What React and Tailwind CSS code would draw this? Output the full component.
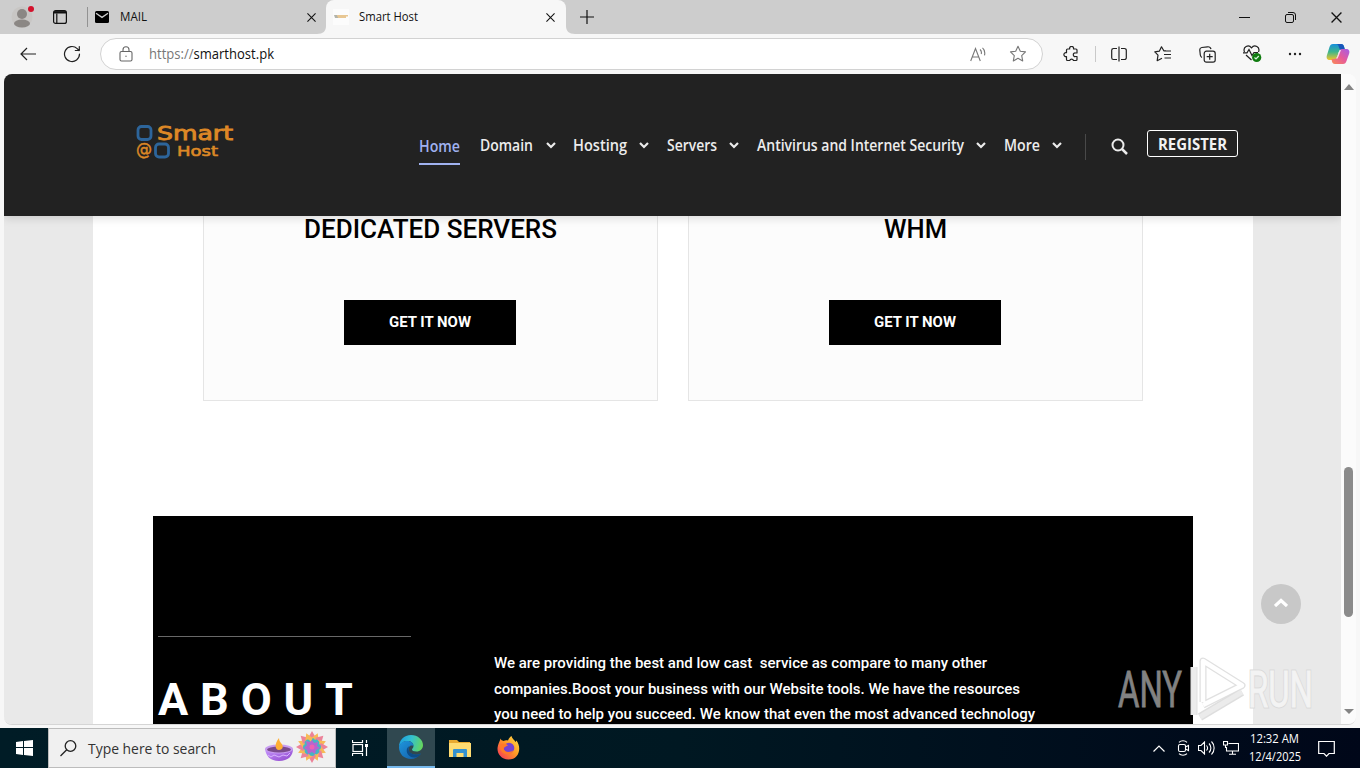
import clsx from 'clsx'

const navItems = [
  { label: 'Domain', width: 'w-[93px]', text: 'w-[54px]', length: 53 },
  { label: 'Hosting', width: 'w-[94px]', text: 'w-[54px]', length: 54 },
  { label: 'Servers', width: 'w-[90px]', text: 'w-[50px]', length: 50 },
  { label: 'Antivirus and Internet Security', width: 'w-[247px]', text: 'w-[207px]', length: 207 },
  { label: 'More', width: 'w-[81px]', text: 'w-[36px]', length: 36 },
]

const aboutLines = [
  { text: 'We are providing the best and low cast\u00a0 service as compare to many other', length: 493 },
  { text: 'companies.Boost your business with our Website tools. We have the resources', length: 526 },
  { text: 'you need to help you succeed. We know that even the most advanced technology', length: 541 },
]

// One line of text fitted to a known width
function FitText({ children, length, size, weight = 400, height = 20, className, baseline = 15 }) {
  return (
    <svg width={length} height={height} className={clsx('block shrink-0 overflow-visible', className)} fill="currentColor">
      <text x="0" y={baseline} fontSize={size} fontWeight={weight} textLength={length} lengthAdjust="spacingAndGlyphs">
        {children}
      </text>
    </svg>
  )
}

function Icon({ size = 18, children, className, width = 1.1 }) {
  return (
    <svg
      width={size}
      height={size}
      viewBox="0 0 18 18"
      fill="none"
      stroke="currentColor"
      strokeWidth={width}
      strokeLinecap="round"
      strokeLinejoin="round"
      className={clsx('block shrink-0', className)}
    >
      {children}
    </svg>
  )
}

function CloseIcon({ size = 9 }) {
  return (
    <svg width={size} height={size} viewBox="0 0 10 10" stroke="#111" strokeWidth="1.2" className="block shrink-0">
      <path d="M.5.5l9 9M9.5.5l-9 9" />
    </svg>
  )
}

function TabBar() {
  return (
    <div className="flex h-[34px] items-center bg-[#cdcdcd] text-[#111]">
      <svg width="24" height="24" viewBox="0 0 24 24" className="ml-[11px]">
        <circle cx="11" cy="12" r="10.500" fill="#c8c6c4" />
        <circle cx="11" cy="9" r="5" fill="#8b8784" />
        <ellipse cx="11" cy="18.500" rx="8" ry="4" fill="#8b8784" />
        <circle cx="20" cy="4" r="3" fill="#d3122c" />
      </svg>
      <svg width="14" height="14" viewBox="0 0 14 14" className="ml-[18px]" fill="none" stroke="#111" strokeWidth="1.200">
        <rect x=".6" y=".6" width="12.800" height="12.800" rx="2" />
        <path d="M1 2.300h12" strokeWidth="2.400" />
        <path d="M3.800 3.500V13" />
      </svg>
      <div className="ml-5 h-5 w-px bg-[#929292]" />
      <svg width="14" height="12" viewBox="0 0 14 12" className="ml-[7px]">
        <rect width="14" height="12" rx="1.500" fill="#000" />
        <path d="M1 2.300L7 6.400l6-4.100" fill="none" stroke="#cdcdcd" strokeWidth="1.300" />
      </svg>
      <FitText length={27} size={12} height={20} baseline={14} className="ml-[11px]">MAIL</FitText>
      <div className="ml-[160px]"><CloseIcon /></div>
      <svg width="10" height="34" viewBox="0 0 10 34" className="ml-auto">
        <path d="M1 34c6 0 9-3 9-8v8z" fill="#f7f7f7" />
      </svg>
      <div className="flex h-full w-[240px] items-center rounded-t-lg bg-[#f7f7f7]">
        <svg width="16" height="16" viewBox="0 0 16 16" className="ml-[7px]">
          <rect width="16" height="16" fill="#fcfcfc" />
          <path d="M1 6h4v3H2z" fill="#b3b4aa" />
          <path d="M4 6h11v1.500H4zM5 7.500h8V9H5z" fill="#e8c793" />
        </svg>
        <FitText length={59} size={12} height={20} baseline={14} className="ml-[10px]">Smart Host</FitText>
        <div className="ml-[128px]"><CloseIcon /></div>
      </div>
      <svg width="10" height="34" viewBox="0 0 10 34">
        <path d="M9 34c-6 0-9-3-9-8v8z" fill="#f7f7f7" />
      </svg>
      <svg width="14" height="14" viewBox="0 0 14 14" className="ml-[4px]" stroke="#111" strokeWidth="1.200">
        <path d="M7 0v14M0 7h14" />
      </svg>
      <div className="ml-[645px] flex w-[121px] shrink-0 items-center">
        <div className="h-px w-[11px] bg-[#111]" />
        <svg width="11" height="11" viewBox="0 0 11 11" className="ml-[35px]" fill="none" stroke="#111">
          <rect x=".5" y="2.500" width="8" height="8" rx="1.500" />
          <path d="M3 .5h5a2.500 2.500 0 0 1 2.500 2.500v5" />
        </svg>
        <div className="ml-[35px]"><CloseIcon size={11} /></div>
      </div>
    </div>
  )
}

function CopilotLogo() {
  return (
    <svg width="24" height="22" viewBox="0 0 24 22" className="block shrink-0">
      <defs>
        <linearGradient id="copilotLeft" x1="0" y1="0" x2="0" y2="1">
          <stop offset="0" stopColor="#168fdc" />
          <stop offset=".5" stopColor="#3fb68a" />
          <stop offset="1" stopColor="#f4c52a" />
        </linearGradient>
        <linearGradient id="copilotRight" x1="1" y1="0" x2="0" y2="1">
          <stop offset="0" stopColor="#a35de8" />
          <stop offset=".5" stopColor="#e65a9a" />
          <stop offset="1" stopColor="#fa8b55" />
        </linearGradient>
      </defs>
      <path d="M7 1h8c2 0 2.500 1 3 2.500L19 7h-3c-2 0-3 1-3.600 3l-1.700 5c-.5 1.500-1 2-2.700 2H4c-3 0-4-2-3-5L3.500 4C4.200 2 5 1 7 1z" fill="url(#copilotLeft)" />
      <path d="M10 1h5c2 0 2.500 1 3 2.500L19 7h-3c-2 0-2.500-1-3-2.500C12.500 2.500 12 1 10 1z" fill="#1856ba" />
      <path d="M17 21H9c-2 0-2.500-1-3-2.500L5.500 16H8c2 0 3-1 3.600-3l1.700-4.500C14 6.700 14.500 6 16 6h4c3 0 4 2 3 5l-2.500 7c-.7 2-1.500 3-3.500 3z" fill="url(#copilotRight)" />
      <path d="M12.400 10l1.200-3H15l-2.500 6.500-1.400 2.500-1-1c1.200-.8 1.900-3 2.300-5z" fill="#fff" opacity=".8" />
    </svg>
  )
}

function Toolbar() {
  return (
    <div className="flex h-10 items-center bg-[#f7f7f7] text-[#222]">
      <svg width="16" height="14" viewBox="0 0 16 14" className="ml-5" fill="none" stroke="#222" strokeWidth="1.200">
        <path d="M16 7H1M7 1L1 7l6 6" />
      </svg>
      <Icon size={18} className="ml-[27px]" width={1.2}>
        <path d="M16.500 9a7.500 7.500 0 1 1-2.300-5.400L16 5.500M16.300 1.500v4h-4" />
      </Icon>
      <div className="ml-[19px] flex h-8 w-[943px] items-center rounded-full border border-[#d2d2d2] bg-white">
        <svg width="14" height="16" viewBox="0 0 14 16" className="ml-[18px]" fill="none" stroke="#666" strokeWidth="1.100">
          <rect x="1" y="5.500" width="12" height="9.500" rx="1.500" />
          <path d="M4 5.500V3.700a3 3 0 0 1 6 0v1.800" />
          <circle cx="7" cy="10.300" r=".7" fill="#666" stroke="none" />
        </svg>
        <svg width="126" height="20" className="ml-4 block overflow-visible">
          <text x="0" y="15" fontSize="14" textLength="125" lengthAdjust="spacingAndGlyphs" fill="#111">
            <tspan fill="#777">https://</tspan>smarthost.pk
          </text>
        </svg>
        <svg width="18" height="15" viewBox="0 0 18 15" className="ml-[695px]" fill="none" stroke="#777" strokeWidth="1.100">
          <path d="M.7 14L5.500 1.500 10.300 14M2.500 10h6M10 2.500c1.200 1 1.700 2.700 1.200 4.500M12.500 .8c2 1.700 2.800 4 2 7.500" />
        </svg>
        <Icon size={18} className="ml-[21px] text-[#777]">
          <path d="M9 1.300l2.300 4.900 5.200.7-3.800 3.700 1 5.300L9 13.300 4.300 15.900l1-5.300L1.500 6.900l5.200-.7z" />
        </Icon>
      </div>
      <svg width="16" height="16" viewBox="0 0 16 16" className="ml-[20px]" fill="none" stroke="#222" strokeWidth="1.200" strokeLinejoin="round">
        <path d="M4.500 3h2.200a2 2 0 1 1 3.800 0H13a1 1 0 0 1 1 1v3h-1.500a1.800 1.800 0 1 0 0 3.500H14v3a1 1 0 0 1-1 1h-2.500a2 2 0 0 0-3.800 0H4.500a1 1 0 0 1-1-1V10.500a2 2 0 1 1 0-3.800V4a1 1 0 0 1 1-1z" />
      </svg>
      <div className="ml-4 h-4 w-px bg-[#c9c9c9]" />
      <svg width="16" height="16" viewBox="0 0 16 16" className="ml-[15px]" fill="none" stroke="#222" strokeWidth="1.200">
        <path d="M6 2.500H2.500a1.800 1.800 0 0 0-1.800 1.800v7.400a1.800 1.800 0 0 0 1.800 1.800H6M10 2.500h3.500a1.800 1.800 0 0 1 1.800 1.800v7.400a1.800 1.800 0 0 1-1.800 1.800H10M8 .5v15" />
      </svg>
      <svg width="18" height="16" viewBox="0 0 18 16" className="ml-[27px]" fill="none" stroke="#222" strokeWidth="1.200" strokeLinejoin="round">
        <path d="M12 4.800H9.800L7.500.8 5.300 5.200l-4.500.7L4 9.200l-.8 5.500 4.800-2.500M11.500 5H17M10 8.500h7M10.500 12H17" />
      </svg>
      <svg width="17" height="17" viewBox="0 0 17 17" className="ml-[27px]" fill="none" stroke="#222" strokeWidth="1.200">
        <rect x="5.200" y="5.200" width="11" height="11" rx="2.200" />
        <path d="M10.700 7.700v6M7.700 10.700h6M3 11.500C1.800 11 1.500 10.300 1.300 9L.8 4.200C.6 2.700 1.400 1.800 2.800 1.500L8.500.8c1.800-.2 3 .5 3.500 2.300" />
      </svg>
      <svg width="19" height="18" viewBox="0 0 19 18" className="ml-[27px]" fill="none" stroke="#222" strokeWidth="1.200">
        <path d="M1.500 7C-.5 2 5.500-1 8.500 2.800 11.500-1 17.500 2 15.500 7M3 10l5.500 5M0 7.800h4L6 4.500l3 6 2-3h4" />
        <circle cx="13.700" cy="12.500" r="4.600" fill="#107c10" stroke="none" />
        <path d="M11.500 12.500l1.500 1.500 2.800-3" stroke="#d9f7df" />
      </svg>
      <svg width="14" height="4" viewBox="0 0 14 4" className="ml-[26px]" fill="#222">
        <circle cx="2" cy="2" r="1.200" />
        <circle cx="7" cy="2" r="1.200" />
        <circle cx="12" cy="2" r="1.200" />
      </svg>
      <div className="ml-auto mr-[10px]"><CopilotLogo /></div>
    </div>
  )
}

function SmartHostLogo() {
  return (
    <svg width="98" height="36" viewBox="0 0 98 36" className="ml-[132px] block shrink-0 overflow-visible font-['DejaVu_Sans']" fill="#dd8826" stroke="#dd8826">
      <rect x="2" y="2.500" width="13" height="13" rx="3.500" fill="none" stroke="#2d659b" strokeWidth="2.800" />
      <rect x="19.500" y="20" width="13" height="13" rx="3.500" fill="none" stroke="#2d659b" strokeWidth="2.800" />
      <text x="21" y="16" fontSize="20" textLength="76" lengthAdjust="spacingAndGlyphs" strokeWidth=".9">Smart</text>
      <text x="0" y="31" fontSize="17" textLength="16" lengthAdjust="spacingAndGlyphs" strokeWidth=".5">@</text>
      <text x="41" y="31.500" fontSize="13.500" textLength="41" lengthAdjust="spacingAndGlyphs" strokeWidth=".6">Host</text>
    </svg>
  )
}

function SiteHeader() {
  return (
    <header className="relative z-10 flex h-[142px] items-center bg-[#222] text-[#ececec] shadow-[0_2px_9px_rgba(0,0,0,0.14)]">
      <div className="-mt-[6px]"><SmartHostLogo /></div>
      <nav className="ml-[185px] mt-px flex items-center">
        <div className="mr-5 mt-[6px] h-[33px] border-b-2 border-[#a0b2f0] text-[#a0b2f0]">
          <FitText length={41} size={15.5} weight={600} className="mt-[5px]">Home</FitText>
        </div>
        {navItems.map((item) => (
          <div key={item.label} className={clsx('flex items-center', item.width)}>
            <FitText length={item.length} size={15.5} weight={600} className={item.text}>{item.label}</FitText>
            <svg width="10" height="7" viewBox="0 0 10 7" className="ml-3 -mt-px block" fill="none" stroke="#ececec" strokeWidth="2.200">
              <path d="M1 1l4 4 4-4" />
            </svg>
          </div>
        ))}
      </nav>
      <div className="mt-[3px] h-[26px] w-px bg-[#494949]" />
      <svg width="17" height="17" viewBox="0 0 17 17" className="ml-[25px] mt-[3px]" fill="none" stroke="#ececec" strokeWidth="2">
        <circle cx="7" cy="7" r="5.500" />
        <path d="M11 11l5 5" strokeWidth="2.500" />
      </svg>
      <div className="-mt-[3px] ml-[19px] flex h-[27px] w-[91px] items-center justify-center rounded-[3px] border border-white text-[#f2f2f2]">
        <FitText length={69} size={15.5} weight={700} height={18}>REGISTER</FitText>
      </div>
    </header>
  )
}

function ServiceCard({ title, length }) {
  return (
    <div className="flex h-[185px] w-[455px] flex-col items-center border border-t-0 border-[#e5e5e5] bg-[#fcfcfc] pr-px font-[Roboto]">
      <FitText length={length} size={26} weight={500} height={26} baseline={22} className="text-black">{title}</FitText>
      <button className="mt-[58px] flex h-[45px] w-[172px] items-center justify-center bg-black text-white">
        <FitText length={82} size={15} weight={700} baseline={14}>GET IT NOW</FitText>
      </button>
    </div>
  )
}

function About() {
  return (
    <section className="mx-auto mt-[115px] flex h-[300px] w-[1040px] bg-black font-[Roboto] text-white">
      <div className="ml-[5px] mt-[120px] w-[253px]">
        <div className="h-px bg-[#686868]" />
        <h2 className="mt-[39px] font-bold">
          <svg width="196" height="48" className="block overflow-visible" fill="currentColor">
            <text x="0" y="39" fontSize="45" textLength="195" lengthAdjust="spacing">ABOUT</text>
          </svg>
        </h2>
      </div>
      <div className="ml-[83px] mt-[134px]">
        {aboutLines.map((line) => (
          <FitText key={line.text} length={line.length} size={15} weight={500} height={25.5} baseline={18}>{line.text}</FitText>
        ))}
      </div>
    </section>
  )
}

function Watermark() {
  return (
    <svg width="200" height="70" viewBox="0 0 200 70" className="absolute left-[1113px] top-[580px] z-20">
      <g className="font-[Roboto]" fontSize="50">
        <text x="1" y="53" textLength="64" lengthAdjust="spacingAndGlyphs" fill="#828282" stroke="#828282" strokeWidth=".8">ANY</text>
        <text x="131" y="53" textLength="65" lengthAdjust="spacingAndGlyphs" fill="#dadada" stroke="#dadada" strokeWidth="3">RUN</text>
        <text x="131" y="53" textLength="65" lengthAdjust="spacingAndGlyphs" fill="#f3f3f3" stroke="#f3f3f3" strokeWidth=".8">RUN</text>
      </g>
      <g fill="none" strokeLinejoin="round">
        <path d="M86 48V7l39 24.500L86 51M77 13v48" stroke="#e0e0e0" strokeWidth="7" />
        <path d="M83 63l42-25" stroke="#dedede" strokeWidth="8" />
        <path d="M77 13v48" stroke="#ececec" strokeWidth="5" />
        <path d="M83 63l42-25" stroke="#ebebeb" strokeWidth="5" />
        <path d="M86 48V7l39 24.500L86 51" stroke="#fff" strokeWidth="4.500" />
      </g>
    </svg>
  )
}

function Page() {
  return (
    <div className="relative mx-1 flex h-[651px] overflow-hidden rounded-lg border-b border-[#d5d5d5] bg-[#fafafa]">
      <div className="w-[1337px] shrink-0 overflow-hidden bg-[#e9e9e9]">
        <SiteHeader />
        <main className="ml-[89px] h-[509px] w-[1160px] bg-white">
          <div className="flex gap-[30px] pl-[110px]">
            <ServiceCard title="DEDICATED SERVERS" length={253} />
            <ServiceCard title="WHM" length={63} />
          </div>
          <About />
        </main>
      </div>
      <div className="flex w-[15px] flex-col items-center bg-[#fbfbfb]">
        <div className="mt-[10px] border-x-[5px] border-b-[6px] border-x-transparent border-b-[#858585]" />
        <div className="mt-[377px] h-[150px] w-[9px] rounded-full bg-[#8b8b8b]" />
        <div className="mt-[92px] border-x-[5px] border-t-[5px] border-x-transparent border-t-[#858585]" />
      </div>
      <button className="absolute left-[1257px] top-[510px] flex size-10 items-center justify-center rounded-full bg-[#c8c8c8]">
        <svg width="14" height="9" viewBox="0 0 14 9" className="-mt-[3px]" fill="none" stroke="#fff" strokeWidth="3.200">
          <path d="M1 8l6-5.500L13 8" />
        </svg>
      </button>
      <Watermark />
    </div>
  )
}

function SearchArt() {
  return (
    <svg width="65" height="34" viewBox="0 0 65 34" className="ml-auto mr-[6px] block">
      <defs>
        <linearGradient id="lampBowl" x1="0" y1="0" x2="1" y2="1">
          <stop stopColor="#c899ff" />
          <stop offset="1" stopColor="#8e43cb" />
        </linearGradient>
      </defs>
      <path d="M1 18c1 7 5 12 14 12s14-5 14-12z" fill="url(#lampBowl)" />
      <ellipse cx="15" cy="18" rx="14" ry="4.500" fill="#c79bf0" />
      <ellipse cx="15" cy="18.500" rx="12" ry="3" fill="#7a4a8c" />
      <path d="M15 7c-5 6-4 12 0 12 4 0 5-4 2-7-1-1-2-3-2-5z" fill="#ffae35" />
      <path d="M4 24l3 2 3-2 5 2 4-2 4 1 3-3" fill="none" stroke="#d8b4fe" strokeWidth="1" />
      <g transform="translate(48 16)">
        {[0, 45, 90, 135, 180, 225, 270, 315].map((angle) => (
          <g key={angle} transform={`rotate(${angle})`}>
            <path d="M0-16l4 7-4 4-4-4z" fill="#ec8299" />
            <path d="M0-15l4 7-4 4-4-4z" fill="#f7b955" transform="rotate(22.500)" />
            <circle cy="-6" r="3" fill="#45b5c4" />
          </g>
        ))}
        <path d="M0-7l2 3 4-1-1 4 3 2-4 2-1 4-3-2-4 2-1-4-3-2 3-3-1-4 4 1z" fill="#b565cf" />
        <circle r="2.500" fill="#ed61b2" />
      </g>
    </svg>
  )
}

function EdgeLogo() {
  return (
    <svg width="24" height="24" viewBox="0 0 24 24">
      <defs>
        <linearGradient id="edgeTop" x1="0" y1=".3" x2="1" y2=".5">
          <stop stopColor="#1b9de0" />
          <stop offset=".5" stopColor="#35c1cd" />
          <stop offset="1" stopColor="#65d65d" />
        </linearGradient>
        <linearGradient id="edgeBase" x1="0" y1="0" x2="1" y2="1">
          <stop stopColor="#1e95dc" />
          <stop offset="1" stopColor="#135ba5" />
        </linearGradient>
      </defs>
      <path d="M0 12C0 5 5 0 12 0s12 5 12 10c0 4-3 6.500-6.500 6.500-3 0-4.500-1-4.500-2s1.500-1.500 1.500-3.500C14.500 8 12 6 8.500 6 4 6 1 9 0 12z" fill="url(#edgeTop)" />
      <path d="M0 12c1-4 4-6 8.500-6 3.500 0 6 2.300 6 5-3-1.500-5 .5-5 3.500 0 4 6 7 12.500 4C19.500 22 16 24 12 24 5 24 0 19 0 12z" fill="url(#edgeBase)" />
      <path d="M10.500 11C5 14 8 22.500 15.500 22.500c2.500 0 5-1.500 6.500-4-1 .7-2.800 1.200-4.500 1.200-5 0-8-3-8-5.700 0-1.300.4-2.300 1-3z" fill="#0d4c87" />
    </svg>
  )
}

function FirefoxLogo() {
  return (
    <svg width="23" height="24" viewBox="0 0 23 24">
      <defs>
        <linearGradient id="foxFire" x1="1" y1="0" x2="0" y2="1">
          <stop stopColor="#ffe34c" />
          <stop offset=".45" stopColor="#ff9b25" />
          <stop offset="1" stopColor="#f52b5d" />
        </linearGradient>
      </defs>
      <path d="M3.500 2.500C4 4 5 4.500 6.500 5c1.500-.8 3-.8 4.500-.5C11.500 2.500 13 1 14.500 0c.5 3 3 3.500 4 6l1-1.500C25 12 22 23.500 11.500 23.500 3 23.500-1 16 1 9.500 1.500 7 3 5 3.500 2.500z" fill="url(#foxFire)" />
      <circle cx="12" cy="12" r="5.300" fill="#7542d2" />
      <path d="M3 9c3-2.500 6-1.500 8 .5-2 .5-2.500 1.500-4.500 2.500.5 4 6 5.500 10 2-1.500 5-9.500 6-12.500.5C3 13 2.700 11 3 9z" fill="#ff7a28" />
    </svg>
  )
}

function Taskbar() {
  return (
    <div className="mt-[3px] flex h-10 items-center bg-gradient-to-r from-[#001c26] via-[#001822] to-[#000719] text-white">
      <svg width="17" height="16" viewBox="0 0 17 16" className="ml-4 mr-[15px]" fill="#fff">
        <path d="M0 2l7-1v6H0zM8 .9L17 0v7H8zM0 8h7v7l-7-1zM8 8h9v8l-9-1z" />
      </svg>
      <div className="flex h-10 w-[288px] items-center border border-[#bcbcbc] bg-[#f0f0f0] text-[#333]">
        <svg width="17" height="17" viewBox="0 0 17 17" className="ml-[11px]" fill="none" stroke="#222" strokeWidth="1.300">
          <circle cx="10.500" cy="6" r="5.300" />
          <path d="M6.700 9.800L.5 16" />
        </svg>
        <FitText length={128} size={15} height={20} baseline={16} className="ml-[11px]">Type here to search</FitText>
        <SearchArt />
      </div>
      <svg width="17" height="16" viewBox="0 0 17 16" className="ml-4" fill="none" stroke="#fff" strokeWidth="1.200">
        <path d="M.5 0v2.500h10V0M.5 16v-2.500h10V16M14.500 0v3M14.500 7v9" />
        <rect x="1" y="4.500" width="9.500" height="7" />
        <path d="M13 4h3v3h-3z" fill="#fff" stroke="none" />
      </svg>
      <div className="ml-[18px] flex h-10 w-12 items-center justify-center border-b-2 border-[#76b9ed] bg-[#304850]">
        <EdgeLogo />
      </div>
      <svg width="22" height="19" viewBox="0 0 22 19" className="ml-[14px]">
        <path d="M0 1h8l2 2h11v15H0z" fill="#e9aa31" />
        <path d="M0 4h22v14H0z" fill="#ffdc72" />
        <path d="M4 18v-7c0-1 1-1 1-1h12c1 0 1 1 1 1v7h-3.500v-4h-7v4z" fill="#3592d0" />
      </svg>
      <div className="ml-[26px]"><FirefoxLogo /></div>
      <div className="ml-auto flex items-center">
        <svg width="12" height="7" viewBox="0 0 12 7" fill="none" stroke="#fff" strokeWidth="1.200">
          <path d="M.5 6.500L6 1l5.500 5.500" />
        </svg>
        <svg width="13" height="16" viewBox="0 0 13 16" className="ml-[12px]" fill="none" stroke="#fff" strokeWidth="1.100">
          <rect x="1.500" y="4.500" width="7" height="7" rx="1.500" />
          <path d="M8.500 7l3-1.500v5l-3-1.500M2 2.300C4 .2 8 .2 10 2.300M2 13.700c2 2.100 6 2.100 8 0" />
        </svg>
        <svg width="17" height="14" viewBox="0 0 17 14" className="ml-2" fill="none" stroke="#fff" strokeWidth="1.100">
          <path d="M.5 4.500H3L6.500 1v12L3 9.500H.5zM8.500 4.500c1.300 1.500 1.300 3.500 0 5M11 2.500c2.500 2.500 2.500 6.500 0 9M13.500.5c3.500 3.500 3.500 9.500 0 13" />
        </svg>
        <svg width="16" height="14" viewBox="0 0 16 14" className="ml-2" fill="none" stroke="#fff" strokeWidth="1.100">
          <path d="M5.500 2.500h10v7.500H3.500V6M9.500 10v3M6 13.300h7M.5.5h4V4h-4zM2.500 4v3" />
        </svg>
        <div className="ml-[9px] flex w-[53px] flex-col items-center">
          <FitText length={49} size={12} height={18} baseline={13}>12:32 AM</FitText>
          <FitText length={52} size={12} height={18} baseline={13}>12/4/2025</FitText>
        </div>
        <svg width="17" height="17" viewBox="0 0 17 17" className="ml-[17px] mr-[25px]" fill="none" stroke="#fff" strokeWidth="1.200">
          <path d="M.7 1.500h15.600v12H11l-2.500 2.700L6 13.500H.7z" />
        </svg>
      </div>
    </div>
  )
}

export default function App() {
  return (
    <div className="h-[768px] w-[1360px] overflow-hidden bg-[#f7f7f7] font-['Open_Sans','Noto_Sans',sans-serif]">
      <TabBar />
      <Toolbar />
      <Page />
      <Taskbar />
    </div>
  )
}
